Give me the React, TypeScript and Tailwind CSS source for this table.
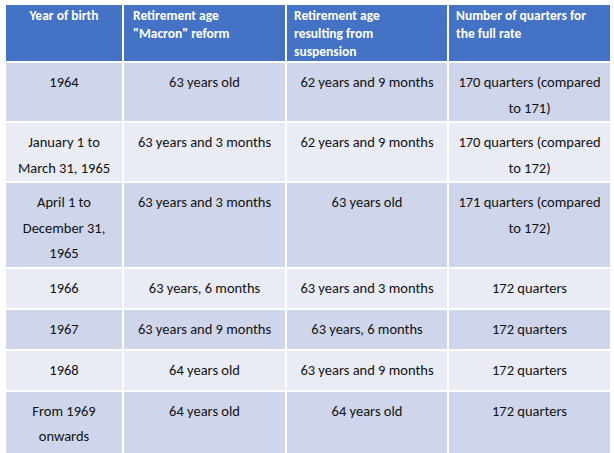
const rows: { cells: string[][]; h: string; dark: boolean }[] = [
  { cells: [['1964'], ['63 years old'], ['62 years and 9 months'], ['170 quarters (compared', 'to 171)']], h: 'h-[57px]', dark: true },
  { cells: [['January 1 to', 'March 31, 1965'], ['63 years and 3 months'], ['62 years and 9 months'], ['170 quarters (compared', 'to 172)']], h: 'h-[59px]', dark: false },
  { cells: [['April 1 to', 'December 31,', '1965'], ['63 years and 3 months'], ['63 years old'], ['171 quarters (compared', 'to 172)']], h: 'h-[83px]', dark: true },
  { cells: [['1966'], ['63 years, 6 months'], ['63 years and 3 months'], ['172 quarters']], h: 'h-[41px]', dark: false },
  { cells: [['1967'], ['63 years and 9 months'], ['63 years, 6 months'], ['172 quarters']], h: 'h-[41px]', dark: true },
  { cells: [['1968'], ['64 years old'], ['63 years and 9 months'], ['172 quarters']], h: 'h-[41px]', dark: false },
  { cells: [['From 1969', 'onwards'], ['64 years old'], ['64 years old'], ['172 quarters']], h: 'h-[64px]', dark: true },
];

const headers: { lines: string[]; align: string }[] = [
  { lines: ['Year of birth'], align: 'text-center' },
  { lines: ['Retirement age', '"Macron" reform'], align: 'text-left pl-[9px]' },
  { lines: ['Retirement age', 'resulting from', 'suspension'], align: 'text-left pl-[7px]' },
  { lines: ['Number of quarters for', 'the full rate'], align: 'text-left pl-[7px]' },
];

export default function App() {
  return (
    <div className="w-[614px] h-[453px] bg-white overflow-hidden pt-[5px] pl-[6px] font-['Carlito','Lato',sans-serif]">
      <table className="w-[604px] border-collapse table-fixed">
        <colgroup>
          <col className="w-[117px]" />
          <col className="w-[163px]" />
          <col className="w-[162px]" />
          <col className="w-[162px]" />
        </colgroup>
        <thead>
          <tr className="h-[57px] bg-[#4472c4]">
            {headers.map((hd, i) => (
              <th
                key={i}
                className={`align-top pt-[2px] text-[13.5px] leading-[18px] font-bold text-white border-x-2 border-b-2 border-white first:border-l-0 last:border-r-0 ${hd.align}`}
              >
                {hd.lines.map((l, j) => (
                  <div key={j}>{l}</div>
                ))}
              </th>
            ))}
          </tr>
        </thead>
        <tbody>
          {rows.map((r, i) => (
            <tr key={i} className={`${r.h} ${r.dark ? 'bg-[#cfd5ea]' : 'bg-[#e9ebf5]'}`}>
              {r.cells.map((c, j) => (
                <td
                  key={j}
                  className="align-top pt-[7px] text-center text-[14.5px] leading-[25.5px] text-[#111111] border-2 border-white first:border-l-0 last:border-r-0"
                >
                  {c.map((l, k) => (
                    <div key={k}>{l}</div>
                  ))}
                </td>
              ))}
            </tr>
          ))}
        </tbody>
      </table>
    </div>
  );
}
